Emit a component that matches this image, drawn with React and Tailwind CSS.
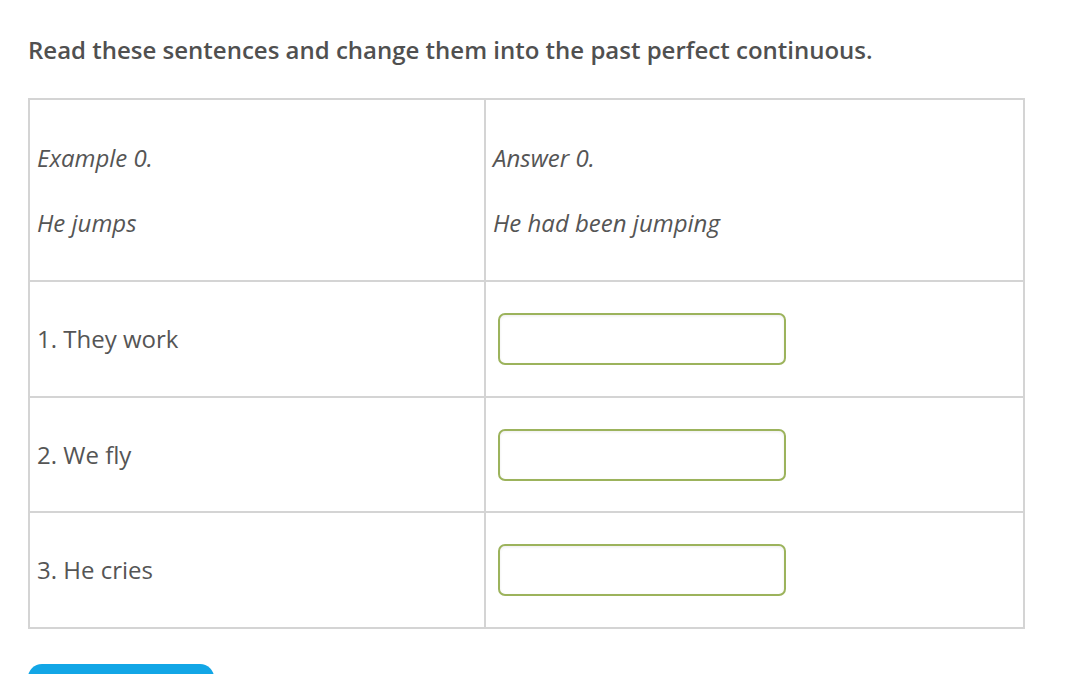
import React from 'react'

const rows = [
  { q: "1. They work", h: "h-[116px]" },
  { q: "2. We fly", h: "h-[115px]" },
  { q: "3. He cries", h: "h-[116px]" },
];

const App = () => {
  return (
    <div className="min-h-[674px] bg-white text-[#555] pl-[28px] pt-[31px]" style={{ fontFamily: '"Open Sans", sans-serif' }}>
      <h2 className="text-[24px] font-semibold leading-[38px] text-[#505050]">
        Read these sentences and change them into the past perfect continuous.
      </h2>

      <table className="mt-[29px] w-[997px] border-collapse table-fixed text-[24px]">
        <colgroup>
          <col className="w-[456px]" />
          <col />
        </colgroup>
        <tbody>
          {/* Example row */}
          <tr className="h-[182px]">
            <td className="border-2 border-[#d4d4d4] pl-[7px] italic align-middle">
              <p className="leading-[30px]">Example 0.</p>
              <p className="leading-[30px] mt-[35px]">He jumps</p>
            </td>
            <td className="border-2 border-[#d4d4d4] pl-[7px] italic align-middle">
              <p className="leading-[30px]">Answer 0.</p>
              <p className="leading-[30px] mt-[35px]">He had been jumping</p>
            </td>
          </tr>

          {rows.map(r => (
            <tr key={r.q} className={r.h}>
              <td className="border-2 border-[#d4d4d4] pl-[7px] align-middle leading-[30px]">{r.q}</td>
              <td className="border-2 border-[#d4d4d4] pl-3 align-middle">
                <input
                  type="text"
                  className="block w-[288px] h-[52px] rounded-[7px] border-2 border-[#9cb35c] bg-white shadow-[inset_0_1px_3px_rgba(0,0,0,0.08)] outline-none"
                />
              </td>
            </tr>
          ))}
        </tbody>
      </table>

      <button className="mt-[35px] block w-[186px] h-[40px] rounded-t-[14px] bg-[#12a6e6]" />
    </div>
  )
}

export default App
